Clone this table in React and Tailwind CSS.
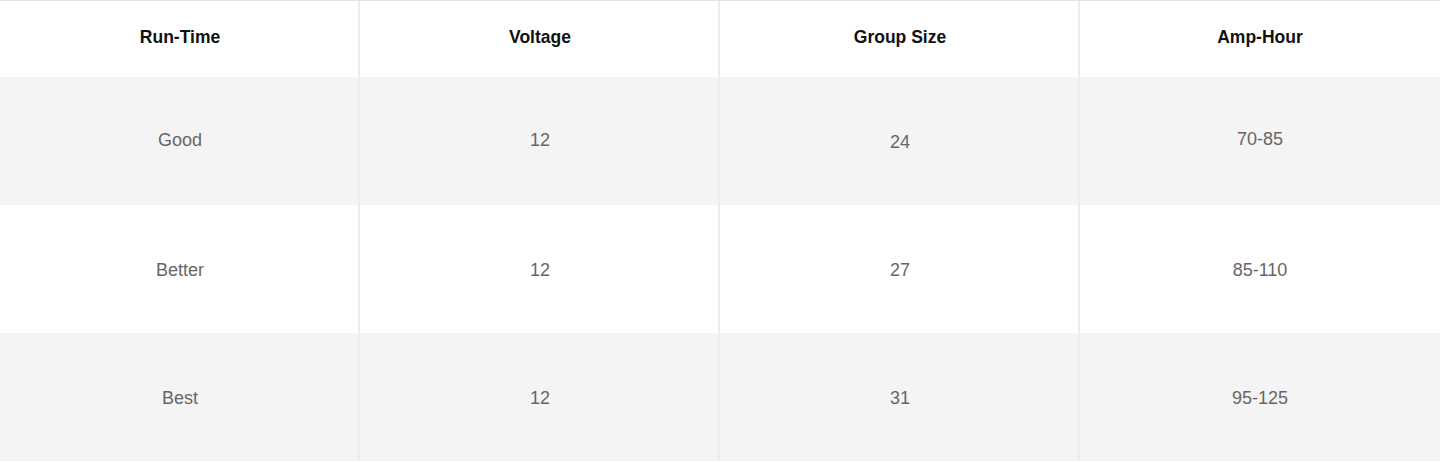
import React from 'react';

const headers = ['Run-Time', 'Voltage', 'Group Size', 'Amp-Hour'];

// first row sits a touch higher in a few cells
const rows = [
  [
    { text: 'Good', shift: 'pb-[2px]' },
    { text: '12', shift: 'pb-[1px]' },
    { text: '24', shift: 'pt-[2px]' },
    { text: '70-85', shift: 'pb-[3px]' },
  ],
  [
    { text: 'Better', shift: 'pt-[2px]' },
    { text: '12', shift: 'pt-[2px]' },
    { text: '27', shift: 'pt-[2px]' },
    { text: '85-110', shift: 'pt-[2px]' },
  ],
  [
    { text: 'Best', shift: 'pt-[2px]' },
    { text: '12', shift: 'pt-[2px]' },
    { text: '31', shift: 'pt-[2px]' },
    { text: '95-125', shift: 'pt-[2px]' },
  ],
];

const App = () => {
  return (
    <div className="w-[1440px] h-[463px] bg-white font-['Liberation_Sans',Arial,sans-serif]">
      <div className="border-t border-[#e3e3e3]">
        <div className="grid grid-cols-4 h-[76px] bg-white">
          {headers.map((h, i) => (
            <div
              key={h}
              className={`flex justify-center pt-[23px] text-[17.5px] font-bold text-[#111] ${i < 3 ? 'border-r-2 border-[#ececec] pl-[2px]' : ''}`}
            >
              {h}
            </div>
          ))}
        </div>
        {rows.map((row, r) => (
          <div key={r} className={`grid grid-cols-4 h-[128px] ${r % 2 === 0 ? 'bg-[#f4f4f4]' : 'bg-white'}`}>
            {row.map((cell, i) => (
              <div
                key={i}
                className={`flex items-center justify-center text-[18px] text-[#666] ${cell.shift} ${i < 3 ? 'border-r-2 border-[#ececec] pl-[2px]' : ''}`}
              >
                {cell.text}
              </div>
            ))}
          </div>
        ))}
      </div>
    </div>
  );
};

export default App;
